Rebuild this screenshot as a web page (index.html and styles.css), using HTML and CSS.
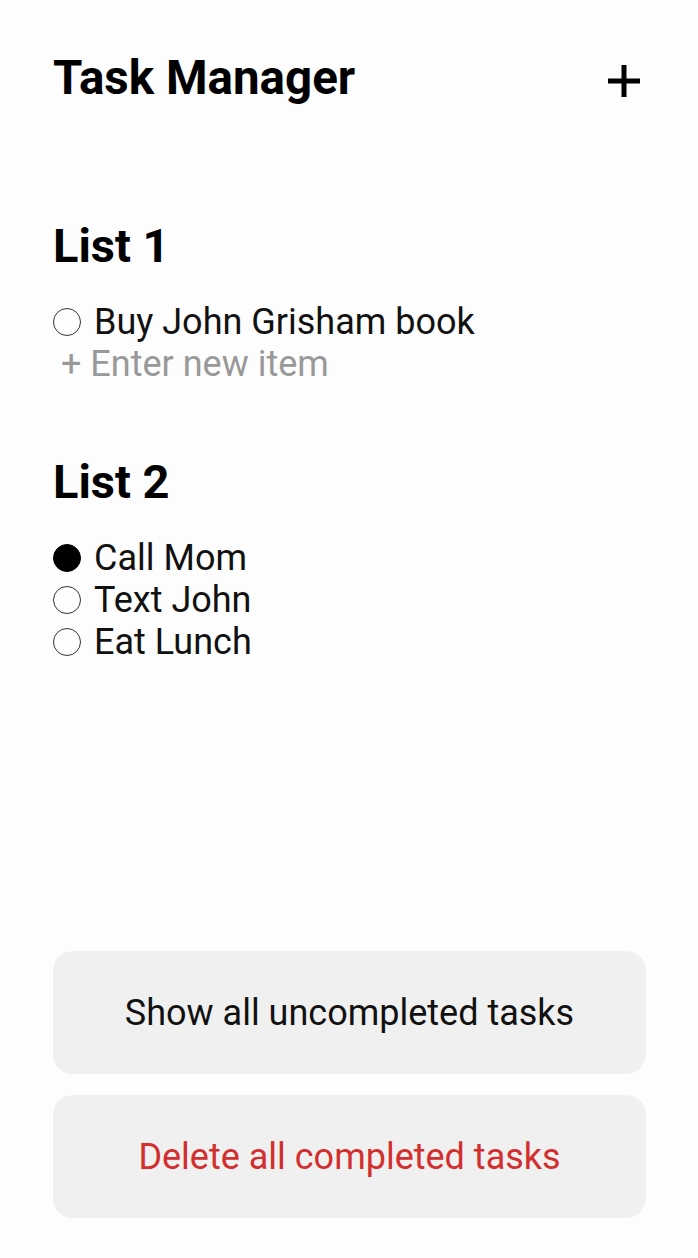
FILE: index.html
```html
<!DOCTYPE html>
<html>
<head>
<meta charset="utf-8">
<link rel="stylesheet" href="styles.css">
</head>
<body>
<div class="app">
  <header class="topbar">
    <h1 class="title">Task Manager</h1>
    <button class="add-btn" aria-label="Add list">
      <svg width="36" height="36" viewBox="0 0 36 36"><path d="M18 2v32M2 18h32" stroke="#000" stroke-width="5" fill="none"/></svg>
    </button>
  </header>

  <section class="list">
    <h2 class="list-title">List 1</h2>
    <ul class="items">
      <li class="item"><span class="radio"></span><span>Buy John Grisham book</span></li>
    </ul>
    <div class="new-item">+ Enter new item</div>
  </section>

  <section class="list">
    <h2 class="list-title">List 2</h2>
    <ul class="items">
      <li class="item"><span class="radio checked"></span><span>Call Mom</span></li>
      <li class="item"><span class="radio"></span><span>Text John</span></li>
      <li class="item"><span class="radio"></span><span>Eat Lunch</span></li>
    </ul>
  </section>

  <div class="actions">
    <button class="action">Show all uncompleted tasks</button>
    <button class="action danger">Delete all completed tasks</button>
  </div>
</div>
</body>
</html>
```

FILE: styles.css
```css
* { box-sizing: border-box; }
html, body { margin: 0; padding: 0; }
body {
  background: #fdfdfd;
  font-family: Roboto, "Liberation Sans", sans-serif;
  color: #111;
}
.app {
  width: 698px;
  height: 1258px;
  padding: 0 52px 40px 53px;
  display: flex;
  flex-direction: column;
}
.topbar {
  display: flex;
  justify-content: space-between;
  align-items: center;
  padding-top: 47px;
  height: 109px;
}
.title {
  margin: 0;
  font-size: 47.5px;
  font-weight: 700;
  color: #000;
  line-height: 52px;
}
.add-btn {
  background: none;
  border: 0;
  padding: 0;
  margin-right: 4px;
  margin-top: 6px;
  display: flex;
}
.list { margin-top: 111px; }
.list + .list { margin-top: 71px; }
.list-title {
  margin: 0;
  font-size: 47px;
  font-weight: 700;
  color: #000;
  line-height: 52px;
}
.items {
  list-style: none;
  margin: 29px 0 0;
  padding: 0;
}
.item {
  display: flex;
  align-items: center;
  gap: 13px;
  font-size: 36px;
  line-height: 42px;
  color: #111;
}
.radio {
  width: 28px;
  height: 28px;
  border: 1.5px solid #333;
  border-radius: 50%;
  flex: none;
}
.radio.checked { background: #000; border-color: #000; }
.new-item {
  font-size: 36px;
  line-height: 42px;
  color: #999;
  padding-left: 8px;
}
.actions {
  margin-top: auto;
  display: flex;
  flex-direction: column;
  gap: 21px;
}
.action {
  height: 123px;
  border: 0;
  border-radius: 20px;
  background: #f0f0f0;
  font-family: Roboto, "Liberation Sans", sans-serif;
  font-size: 36px;
  color: #111;
}
.action.danger { color: #d32f2f; }
```
